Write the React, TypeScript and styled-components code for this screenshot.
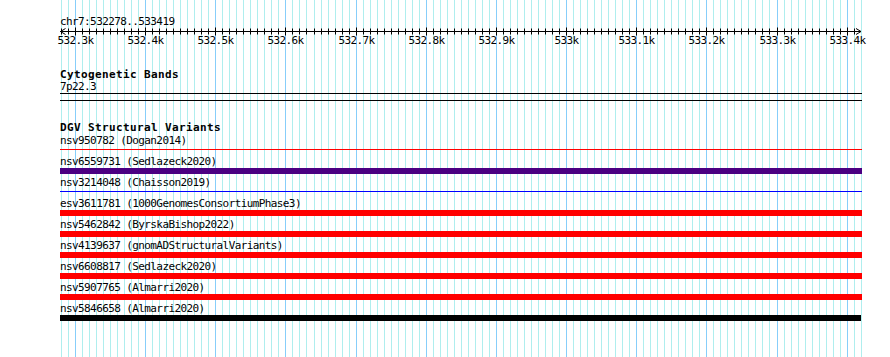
import React from 'react';
import styled, { createGlobalStyle } from 'styled-components';

// genomic scale: x of 532300 and pixels per base
const ORIGIN_BP = 532300;
const ORIGIN_X = 75;
const PX_PER_BP = 0.7015;
const TRACK_LEFT = 60;
const TRACK_WIDTH = 802;
const FRAME_W = 890;
const FRAME_H = 357;

const toX = (bp: number) => ORIGIN_X + (bp - ORIGIN_BP) * PX_PER_BP;
const crisp = (x: number) => Math.round(x) + 0.5;

type Variant = {
    id: string;
    source: string;
    color: string;
    thin?: boolean;
    width?: number;
};

const variants: Variant[] = [
    { id: 'nsv950782', source: 'Dogan2014', color: '#ff0000', thin: true },
    { id: 'nsv6559731', source: 'Sedlazeck2020', color: '#4b0082' },
    { id: 'nsv3214048', source: 'Chaisson2019', color: '#0000ff', thin: true },
    { id: 'esv3611781', source: '1000GenomesConsortiumPhase3', color: '#ff0000' },
    { id: 'nsv5462842', source: 'ByrskaBishop2022', color: '#ff0000' },
    { id: 'nsv4139637', source: 'gnomADStructuralVariants', color: '#ff0000' },
    { id: 'nsv6608817', source: 'Sedlazeck2020', color: '#ff0000' },
    { id: 'nsv5907765', source: 'Almarri2020', color: '#ff0000' },
    { id: 'nsv5846658', source: 'Almarri2020', color: '#000000', width: 801 },
];

const minorTicks: number[] = [];
for (let bp = 532280; bp <= 533420; bp += 10) minorTicks.push(bp);
const majorTicks = minorTicks.filter(bp => bp % 100 === 0 && bp <= 533400);

const GlobalStyle = createGlobalStyle`
    html, body {
        margin: 0;
        padding: 0;
        background: #ffffff;
    }
`;

const Browser = styled.div`
    position: relative;
    width: ${FRAME_W}px;
    height: ${FRAME_H}px;
    overflow: hidden;
    background: #ffffff;
    color: #000000;
    font-family: 'DejaVu Sans Mono', 'Liberation Mono', monospace;
    font-size: 11px;
    letter-spacing: -0.6px;
`;

const GridLayer = styled.svg`
    position: absolute;
    top: 0;
    left: 0;
    width: ${FRAME_W}px;
    height: ${FRAME_H}px;
    pointer-events: none;
`;

const Tracks = styled.div`
    position: relative;
    display: flex;
    flex-direction: column;
    width: ${TRACK_WIDTH}px;
    padding: 15px 0 0 ${TRACK_LEFT}px;
`;

const LocationLabel = styled.div`
    height: 11px;
    line-height: 13px;
    white-space: pre;
`;

const Axis = styled.svg`
    display: block;
    width: ${TRACK_WIDTH}px;
    height: 22px;
    overflow: visible;
    text {
        font-family: 'DejaVu Sans Mono', 'Liberation Mono', monospace;
        font-size: 11px;
        letter-spacing: -0.6px;
        fill: #000000;
    }
`;

const TrackTitle = styled.div<{ $gap: number; $short?: boolean }>`
    margin-top: ${p => p.$gap}px;
    height: ${p => p.$short ? 11 : 12}px;
    line-height: 12px;
    font-weight: bold;
    letter-spacing: 0.38px;
    white-space: pre;
`;

const FeatureLabel = styled.div`
    height: 12px;
    line-height: 12px;
    white-space: pre;
`;

const BandBox = styled.div`
    width: ${TRACK_WIDTH}px;
    height: 8px;
    box-sizing: border-box;
    border-top: 1px solid #000000;
    border-bottom: 1px solid #000000;
`;

const VariantRow = styled.div`
    display: flex;
    flex-direction: column;
    height: 21px;
    box-sizing: border-box;
    padding-top: 2px;
`;

const BarSlot = styled.div`
    height: 6px;
    display: flex;
    flex-direction: column;
`;

const Bar = styled.div<{ $color: string; $thin?: boolean; $width: number }>`
    width: ${p => p.$width}px;
    height: ${p => p.$thin ? 1 : 6}px;
    margin-top: ${p => p.$thin ? 2 : 0}px;
    background: ${p => p.$color};
`;

const Grid: React.FC = () => (
    <GridLayer viewBox={`0 0 ${FRAME_W} ${FRAME_H}`}>
        {minorTicks.map(bp => (
            <line
                key={bp}
                x1={crisp(toX(bp))}
                x2={crisp(toX(bp))}
                y1={0}
                y2={FRAME_H}
                stroke={bp % 100 === 0 ? '#87cefa' : '#afeeee'}
                strokeWidth={1}
            />
        ))}
    </GridLayer>
);

const Ruler: React.FC = () => {
    const y = 5.5;
    const end = TRACK_WIDTH - 1;
    return (
        <Axis viewBox={`0 0 ${TRACK_WIDTH} 22`}>
            <line x1={0} x2={end} y1={y} y2={y} stroke="#000" strokeWidth={1} />
            <polyline points={`5.5,2.5 0.5,${y} 5.5,8.5`} fill="none" stroke="#000" strokeWidth={1} />
            <polyline points={`${end - 5},2.5 ${end},${y} ${end - 5},8.5`} fill="none" stroke="#000" strokeWidth={1} />
            {minorTicks.filter(bp => bp <= 533410).map(bp => {
                const x = crisp(toX(bp)) - TRACK_LEFT;
                const major = bp % 100 === 0;
                return (
                    <line
                        key={bp}
                        x1={x}
                        x2={x}
                        y1={major ? 1.5 : 2.5}
                        y2={major ? 9.5 : 8.5}
                        stroke="#000"
                        strokeWidth={1}
                    />
                );
            })}
            {majorTicks.map(bp => {
                const label = bp % 1000 === 0 ? `${bp / 1000}k` : `${(bp / 1000).toFixed(1)}k`;
                return (
                    <text key={bp} x={Math.round(toX(bp)) - TRACK_LEFT + 0.5} y={18.3} textAnchor="middle">
                        {label}
                    </text>
                );
            })}
        </Axis>
    );
};

const App: React.FC = () => (
    <>
        <GlobalStyle />
        <Browser>
            <Grid />
            <Tracks>
                <LocationLabel>chr7:532278..533419</LocationLabel>
                <Ruler />

                <TrackTitle $gap={21}>Cytogenetic Bands</TrackTitle>
                <FeatureLabel>7p22.3</FeatureLabel>
                <BandBox />

                <TrackTitle $gap={21} $short>DGV Structural Variants</TrackTitle>
                {variants.map(v => (
                    <VariantRow key={v.id}>
                        <FeatureLabel>{`${v.id} (${v.source})`}</FeatureLabel>
                        <BarSlot>
                            <Bar $color={v.color} $thin={v.thin} $width={v.width ?? TRACK_WIDTH} />
                        </BarSlot>
                    </VariantRow>
                ))}
            </Tracks>
        </Browser>
    </>
);

export default App;
